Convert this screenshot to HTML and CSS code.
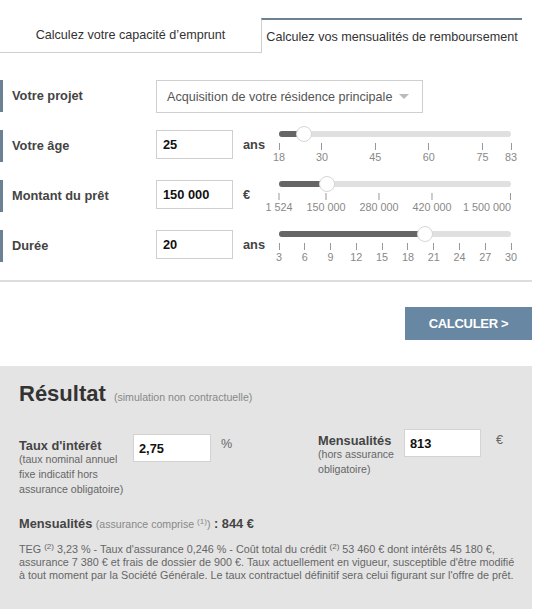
FILE: index.html
```html
<!DOCTYPE html>
<html lang="fr">
<head>
    <meta charset="UTF-8">
    <meta name="viewport" content="width=device-width, initial-scale=1.0">
    <title>Simulateur de prêt</title>
    <link rel="stylesheet" href="styles.css">
</head>
<body>
    <div class="container">
        <div class="tabs">
            <div class="tab">Calculez votre capacité d’emprunt</div>
            <div class="tab active">Calculez vos mensualités de remboursement</div>
        </div>

        <div class="form">
            <div class="row">
                <div class="row-label">Votre projet</div>
                <div class="select-box">
                    <span>Acquisition de votre résidence principale</span>
                    <span class="select-arrow"></span>
                </div>
            </div>

            <div class="row">
                <div class="row-label">Votre âge</div>
                <input class="field-input" type="text" value="25">
                <div class="unit">ans</div>
                <div class="slider">
                    <div class="track">
                        <div class="fill" style="width: 10.8%"></div>
                        <div class="handle" style="left: 10.8%"></div>
                    </div>
                    <div class="ticks">
                        <div class="tick" style="left: 0%"><span>18</span></div>
                        <div class="tick" style="left: 18.5%"><span>30</span></div>
                        <div class="tick" style="left: 41.5%"><span>45</span></div>
                        <div class="tick" style="left: 64.6%"><span>60</span></div>
                        <div class="tick" style="left: 87.7%"><span>75</span></div>
                        <div class="tick" style="left: 100%"><span>83</span></div>
                    </div>
                </div>
            </div>

            <div class="row">
                <div class="row-label">Montant du prêt</div>
                <input class="field-input" type="text" value="150 000">
                <div class="unit">€</div>
                <div class="slider">
                    <div class="track">
                        <div class="fill" style="width: 20.7%"></div>
                        <div class="handle" style="left: 20.7%"></div>
                    </div>
                    <div class="ticks">
                        <div class="tick" style="left: 0%"><span>1 524</span></div>
                        <div class="tick" style="left: 20.3%"><span>150 000</span></div>
                        <div class="tick" style="left: 43.1%"><span>280 000</span></div>
                        <div class="tick" style="left: 66%"><span>420 000</span></div>
                        <div class="tick tick-end" style="left: 100%"><span>1 500 000</span></div>
                    </div>
                </div>
            </div>

            <div class="row">
                <div class="row-label">Durée</div>
                <input class="field-input" type="text" value="20">
                <div class="unit">ans</div>
                <div class="slider">
                    <div class="track">
                        <div class="fill" style="width: 63%"></div>
                        <div class="handle" style="left: 63%"></div>
                    </div>
                    <div class="ticks">
                        <div class="tick" style="left: 0%"><span>3</span></div>
                        <div class="tick" style="left: 11.11%"><span>6</span></div>
                        <div class="tick" style="left: 22.22%"><span>9</span></div>
                        <div class="tick" style="left: 33.33%"><span>12</span></div>
                        <div class="tick" style="left: 44.44%"><span>15</span></div>
                        <div class="tick" style="left: 55.56%"><span>18</span></div>
                        <div class="tick" style="left: 66.67%"><span>21</span></div>
                        <div class="tick" style="left: 77.78%"><span>24</span></div>
                        <div class="tick" style="left: 88.89%"><span>27</span></div>
                        <div class="tick" style="left: 100%"><span>30</span></div>
                    </div>
                </div>
            </div>
        </div>

        <div class="actions">
            <button class="btn">CALCULER &gt;</button>
        </div>

        <div class="result">
            <h2 class="result-title">Résultat <small>(simulation non contractuelle)</small></h2>

            <div class="result-fields">
                <div class="result-field taux">
                    <div class="result-label">
                        <strong>Taux d'intérêt</strong>
                        <span>(taux nominal annuel fixe indicatif hors assurance obligatoire)</span>
                    </div>
                    <input class="result-input" type="text" value="2,75">
                    <div class="result-unit">%</div>
                </div>
                <div class="result-field mens">
                    <div class="result-label">
                        <strong>Mensualités</strong>
                        <span>(hors assurance obligatoire)</span>
                    </div>
                    <input class="result-input" type="text" value="813">
                    <div class="result-unit">€</div>
                </div>
            </div>

            <div class="total">
                <strong>Mensualités</strong> <span class="note">(assurance comprise <sup>(1)</sup>)</span> <strong>: 844 €</strong>
            </div>

            <p class="legal">TEG <sup>(2)</sup> 3,23 % - Taux d'assurance 0,246 % - Coût total du crédit <sup>(2)</sup> 53 460 € dont intérêts 45 180 €,<br>
            assurance 7 380 € et frais de dossier de 900 €. Taux actuellement en vigueur, susceptible d'être modifié<br>
            à tout moment par la Société Générale. Le taux contractuel définitif sera celui figurant sur l'offre de prêt.</p>
        </div>
    </div>
</body>
</html>
```

FILE: styles.css
```css
:root{
    --slate: #6d8194;
    --btn-color: #6887a2;
    --line: #cfcfcf;
    --label: #444;
}
*{
    box-sizing: border-box;
}
body{
    margin: 0;
    font-family: "Liberation Sans", Arial, sans-serif;
    font-size: 12.6px;
    color: #333;
    background: #fff;
}
.container{
    width: 532px;
}

/* tabs */
.tabs{
    display: flex;
    margin-top: 18px;
}
.tab{
    width: 261px;
    height: 35px;
    display: flex;
    align-items: center;
    justify-content: center;
    border-bottom: 1px solid var(--line);
    color: #333;
}
.tab.active{
    border-bottom: 0;
    border-top: 2px solid var(--slate);
    border-left: 1px solid var(--line);
}

/* form rows */
.form{
    margin-top: 27px;
}
.row{
    display: flex;
    align-items: flex-start;
    height: 32px;
    margin-bottom: 18px;
    border-left: 3px solid var(--slate);
}
.row-label{
    width: 153px;
    padding-left: 9px;
    line-height: 32px;
    font-size: 12.8px;
    font-weight: bold;
    color: var(--label);
}
.select-box{
    width: 267px;
    height: 33px;
    display: flex;
    align-items: center;
    justify-content: space-between;
    padding: 0 13px 0 10px;
    border: 1px solid var(--line);
    color: #555;
    white-space: nowrap;
}
.select-arrow{
    width: 0;
    height: 0;
    border-left: 5px solid transparent;
    border-right: 5px solid transparent;
    border-top: 5px solid #bbb;
}
.field-input{
    width: 77px;
    height: 29px;
    margin: 0;
    padding: 0 6px;
    border: 1px solid var(--line);
    font-family: inherit;
    font-size: 12.8px;
    font-weight: bold;
    color: #111;
    outline: 0;
}
.unit{
    width: 46px;
    padding-left: 10px;
    line-height: 29px;
    font-size: 12.8px;
    font-weight: bold;
    color: var(--label);
}

/* sliders */
.slider{
    width: 232px;
    padding-top: 1px;
}
.track{
    position: relative;
    height: 6px;
    border-radius: 3px;
    background-color: #e0e0e0;
}
.fill{
    height: 6px;
    border-radius: 3px 0 0 3px;
    background-color: #666;
}
.handle{
    position: absolute;
    top: -5px;
    width: 16px;
    height: 16px;
    transform: translateX(-50%);
    border-radius: 50%;
    border: 1px solid #d6d6d6;
    background-color: #fff;
}
.ticks{
    position: relative;
    height: 22px;
    margin-top: 6px;
}
.tick{
    position: absolute;
    top: 0;
    display: flex;
    flex-direction: column;
    align-items: center;
    transform: translateX(-50%);
    white-space: nowrap;
}
.tick::before{
    content: "";
    width: 1px;
    height: 7px;
    background-color: #999;
}
.tick span{
    margin-top: 1px;
    font-size: 10.8px;
    line-height: 13px;
    color: #888;
}
.tick.tick-end{
    align-items: flex-end;
    transform: translateX(-100%);
}

/* button */
.actions{
    display: flex;
    justify-content: flex-end;
    border-top: 2px solid #ddd;
    padding-top: 25px;
}
.btn{
    width: 127px;
    height: 33px;
    border: 0;
    background-color: var(--btn-color);
    color: #fff;
    font-family: inherit;
    font-size: 13px;
    font-weight: bold;
    letter-spacing: -0.3px;
    cursor: pointer;
}

/* result */
.result{
    margin-top: 26px;
    padding: 15px 19px 27px;
    background-color: #e4e4e4;
}
.result-title{
    margin: 0;
    font-size: 22px;
    line-height: 26px;
    font-weight: bold;
    color: #333;
}
.result-title small{
    margin-left: 2px;
    font-size: 10.6px;
    font-weight: normal;
    color: #888;
}
.result-fields{
    display: flex;
    margin-top: 19px;
}
.result-field{
    display: flex;
    align-items: flex-start;
}
.result-field.taux{
    width: 299px;
    margin-top: 5px;
}
.result-label{
    width: 114px;
    padding-top: 5px;
}
.mens .result-label{
    width: 86px;
}
.result-label strong{
    display: block;
    font-size: 12.8px;
    line-height: 13px;
    color: var(--label);
}
.result-label span{
    display: block;
    font-size: 10.6px;
    line-height: 15px;
    color: #666;
}
.result-input{
    width: 78px;
    height: 28px;
    margin: 0;
    padding: 0 5px;
    border: 1px solid #d3d3d3;
    background: #fff;
    font-family: inherit;
    font-size: 12.8px;
    font-weight: bold;
    color: #111;
    outline: 0;
}
.mens .result-input{
    width: 77px;
}
.result-unit{
    margin-left: 10px;
    padding-top: 3px;
    line-height: 15px;
    color: #666;
}
.mens .result-unit{
    margin-left: 15px;
    padding-top: 4px;
}
.total{
    margin-top: 19px;
    line-height: 15px;
    font-size: 12.8px;
    color: var(--label);
}
.total .note{
    font-size: 10.6px;
    color: #888;
}
.legal{
    margin: 11px 0 0;
    font-size: 10.8px;
    line-height: 13px;
    color: #666;
    white-space: nowrap;
}
sup{
    position: relative;
    top: -4px;
    font-size: 8px;
    line-height: 0;
    vertical-align: baseline;
}
```
